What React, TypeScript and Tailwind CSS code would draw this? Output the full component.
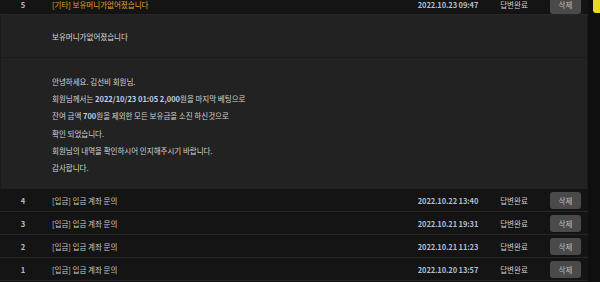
import React from 'react'

const rows = [
  { no: 4, title: '[입금] 입금 계좌 문의', date: '2022.10.22 13:40' },
  { no: 3, title: '[입금] 입금 계좌 문의', date: '2022.10.21 19:31' },
  { no: 2, title: '[입금] 입금 계좌 문의', date: '2022.10.21 11:23' },
  { no: 1, title: '[입금] 입금 계좌 문의', date: '2022.10.20 13:57' },
]

function Row({ no, title, date, open }: { no: number; title: string; date: string; open?: boolean }) {
  return (
    <div className={`flex items-center ${open ? 'h-[19px]' : 'h-[23px]'} border-b border-[#262626] bg-[#141414]`}>
      <div className="w-[46px] text-center font-bold text-[#bdbdbd]">{no}</div>
      <div className={`flex-1 pl-[6px] ${open ? 'text-[#e0a526]' : 'text-[#c4c4c4]'}`}>{title}</div>
      <div className="w-[96px] text-center font-bold tracking-[-0.1px] text-[#b3bdcc]">{date}</div>
      <div className="w-[36px] text-center text-[#cfcfcf]">답변완료</div>
      <div className="w-[56px] pl-[18px]">
        <button className="w-[31px] h-[17px] rounded-[3px] bg-[#4a4a4a] text-[#bdbdbd] flex items-center justify-center">
          삭제
        </button>
      </div>
    </div>
  )
}

export default function App() {
  return (
    <div
      className="flex w-[600px] h-[282px] overflow-hidden bg-[#0f0f0f] text-[7.5px]"
      style={{ fontFamily: '"Noto Sans CJK KR", "Noto Sans", sans-serif' }}
    >
      <div className="w-[588px] -mt-[4px]">
        <Row no={5} title="[기타] 보유머니가없어졌습니다" date="2022.10.23 09:47" open />

        {/* 펼쳐진 문의 내용 */}
        <div className="bg-[#222222] border-x border-[#1a1a1a]">
          <div className="pl-[51px] pt-[13px] pb-[12px] leading-[17px] text-[#dcdcdc] border-b border-[#1b1b1b]">
            보유머니가없어졌습니다
          </div>
          <div className="pl-[51px] pt-[15px] pb-[13px] leading-[17.2px] text-[#d2d2d2]">
            <p>안녕하세요. 김선비 회원님.</p>
            <p>
              회원님께서는 <b className="text-[#c3cde0]">2022/10/23 01:05 2,000</b>원을 마지막 베팅으로
            </p>
            <p>
              잔여 금액 <b className="text-[#c3cde0]">700</b>원을 제외한 모든 보유금을 소진 하신것으로
            </p>
            <p>확인 되었습니다.</p>
            <p>회원님의 내역을 확인하시어 인지해주시기 바랍니다.</p>
            <p>감사합니다.</p>
          </div>
        </div>

        {rows.map((r) => (
          <Row key={r.no} {...r} />
        ))}
      </div>

      <div className="flex-1 pl-[5px]">
        <div className="h-[13px] bg-[#e8dc1a] rounded-bl-[3px]" />
      </div>
    </div>
  )
}
